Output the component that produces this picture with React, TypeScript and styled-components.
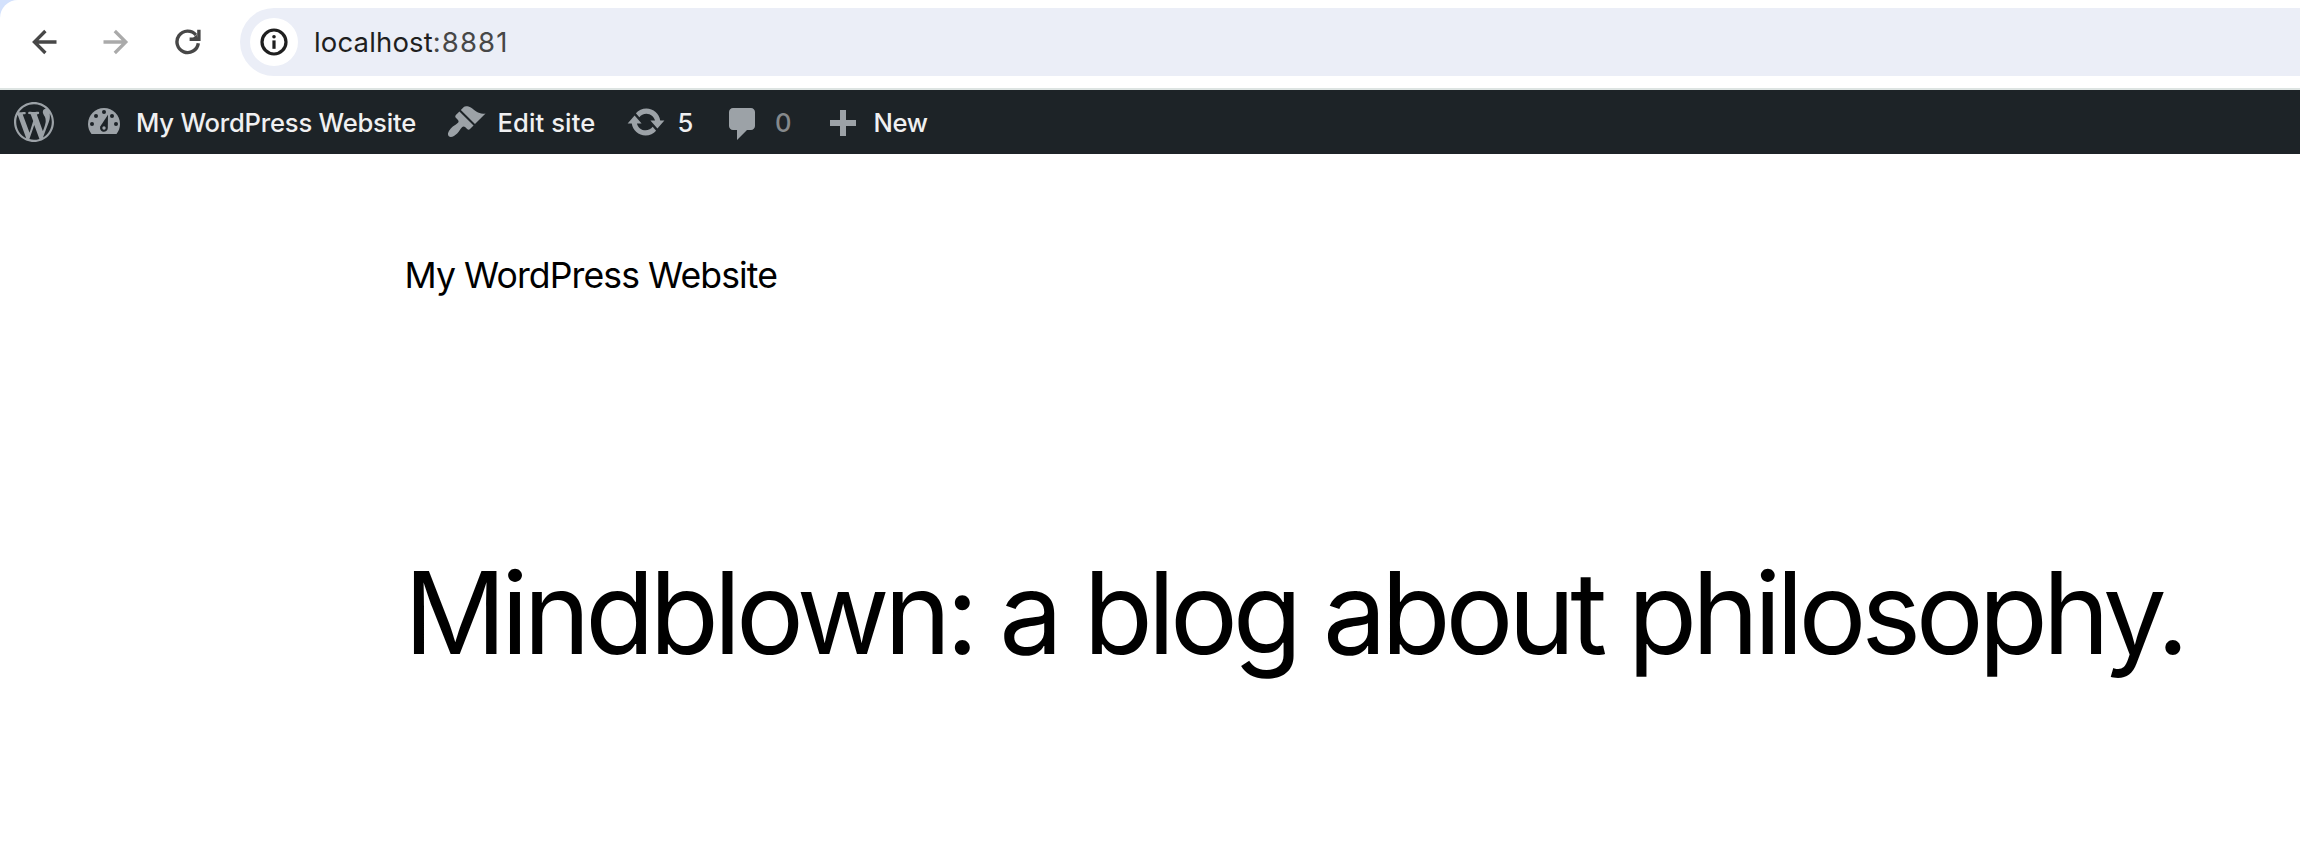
import React from "react";
import styled, { createGlobalStyle } from "styled-components";

const GlobalStyle = createGlobalStyle`
  * { box-sizing: border-box; }
  body { margin: 0; background: #fff; font-family: Inter, "Liberation Sans", sans-serif; }
`;

const Page = styled.div`
  width: 100%;
  height: 868px;
  overflow: hidden;
  background: #fff;
`;

const TabStrip = styled.div`
  background: #d3e1fc;
`;

const BrowserBar = styled.header`
  display: flex;
  align-items: flex-start;
  height: 88px;
  padding: 8px 0 0 20px;
  background: #fff;
  border-top-left-radius: 18px;
`;

const NavButton = styled.span<{ $muted?: boolean; $gap: number }>`
  display: flex;
  width: 48px;
  height: 68px;
  align-items: center;
  justify-content: center;
  margin-right: ${(p) => p.$gap}px;
  color: ${(p) => (p.$muted ? "#aaaaaa" : "#474747")};
`;

const AddressField = styled.div`
  display: flex;
  flex: 1;
  align-items: center;
  height: 68px;
  padding-left: 10px;
  border-radius: 34px 0 0 34px;
  background: #ebeef7;
`;

const InfoButton = styled.span`
  display: flex;
  width: 48px;
  height: 48px;
  align-items: center;
  justify-content: center;
  border-radius: 50%;
  background: #fff;
  color: #1f1f1f;
`;

const Address = styled.span`
  margin-left: 16px;
  font-size: 27.5px;
  line-height: 34px;
  letter-spacing: 0.15px;
  color: #1f1f1f;
  white-space: pre;
`;

const Port = styled.span`
  letter-spacing: 1.1px;
  color: #474747;
`;

const AdminBar = styled.nav`
  display: flex;
  height: 66px;
  padding-left: 14px;
  border-top: 2px solid #dde4e2;
  background: #1d2327;
`;

const AdminItem = styled.span<{ $gap: number }>`
  display: flex;
  height: 64px;
  margin-right: ${(p) => p.$gap}px;
`;

const Glyph = styled.svg<{ $top: number }>`
  width: 40px;
  height: 40px;
  flex: none;
  margin-top: ${(p) => p.$top}px;
  fill: #9ca2a7;
`;

const AdminLabel = styled.span<{ $width: number; $left: number; $spacing?: number; $muted?: boolean }>`
  width: ${(p) => p.$width}px;
  margin-left: ${(p) => p.$left}px;
  font-size: 25.6px;
  font-weight: 450;
  line-height: 66px;
  letter-spacing: ${(p) => p.$spacing ?? 0}px;
  white-space: nowrap;
  color: ${(p) => (p.$muted ? "#85898c" : "#f0f0f1")};
`;

const Content = styled.main`
  display: flex;
  flex-direction: column;
  align-items: flex-start;
  padding: 98px 0 0 404px;
  color: #000;
`;

const SiteTitle = styled.p`
  margin: 0 0 0 0.5px;
  font-size: 35.6px;
  font-weight: 430;
  line-height: 48px;
  letter-spacing: -0.9px;
  white-space: nowrap;
`;

const Headline = styled.h1`
  margin: 247px 0 0;
  font-size: 113.4px;
  font-weight: 440;
  line-height: 132px;
  letter-spacing: -5.21px;
  word-spacing: -0.9px;
  white-space: nowrap;
`;

const paths = {
  wordpress:
    "M20 10c0-5.51-4.49-10-10-10C4.48 0 0 4.49 0 10c0 5.52 4.48 10 10 10 5.51 0 10-4.48 10-10zM7.78 15.37L4.37 6.22c.55-.02 1.17-.08 1.17-.08.5-.06.44-1.13-.06-1.11 0 0-1.45.11-2.37.11-.18 0-.37 0-.58-.01C4.12 2.69 6.87 1.11 10 1.11c2.33 0 4.45.87 6.05 2.34-.68-.11-1.65.39-1.65 1.58 0 .74.45 1.36.9 2.1.35.61.55 1.36.55 2.46 0 1.49-1.4 5-1.4 5l-3.03-8.37c.54-.02.82-.17.82-.17.5-.05.44-1.25-.06-1.22 0 0-1.44.12-2.38.12-.87 0-2.33-.12-2.33-.12-.5-.03-.56 1.2-.06 1.22l.92.08 1.26 3.41zM17.41 10c.24-.64.74-1.87.43-4.25.7 1.29 1.05 2.71 1.05 4.25 0 3.29-1.73 6.24-4.4 7.78.97-2.59 1.94-5.2 2.92-7.78zM6.1 18.09C3.12 16.65 1.11 13.53 1.11 10c0-1.3.23-2.48.72-3.59C3.25 10.3 4.67 14.2 6.1 18.09zm4.03-6.63l2.58 6.98c-.86.29-1.76.45-2.71.45-.79 0-1.57-.11-2.29-.33.81-2.38 1.62-4.74 2.42-7.1z",
  brush:
    "M14.48 11.06L7.41 3.99l1.5-1.5c.5-.56 2.3-.47 3.51.32 1.21.8 1.43 1.28 2.91 2.1 1.18.64 2.45 1.26 4.45.85zm-.71.71L6.7 4.7 4.93 6.47c-.39.39-.39 1.02 0 1.41l1.06 1.06c.39.39.39 1.03 0 1.42-.6.6-1.43 1.11-2.21 1.69-.35.26-.7.53-1.01.84C1.43 14.23.4 16.08 1.4 17.07c.99 1 2.84-.03 4.18-1.36.31-.31.58-.66.85-1.02.57-.78 1.08-1.61 1.69-2.21.39-.39 1.02-.39 1.41 0l1.06 1.06c.39.39 1.02.39 1.41 0z",
  update:
    "M10.2 3.28c3.53 0 6.43 2.61 6.92 6h2.08l-3.5 4-3.5-4h2.32c-.45-1.97-2.21-3.45-4.32-3.45-1.45 0-2.73.71-3.54 1.78L4.95 5.66C6.23 4.2 8.11 3.28 10.2 3.28zm-.4 13.44c-3.52 0-6.43-2.61-6.92-6H.8l3.5-4c1.17 1.33 2.33 2.67 3.5 4H5.48c.45 1.97 2.21 3.45 4.32 3.45 1.45 0 2.73-.71 3.54-1.78l1.71 1.95c-1.28 1.46-3.15 2.38-5.25 2.38z",
  comment: "M5 2h9c1.1 0 2 .9 2 2v7c0 1.1-.9 2-2 2h-2l-5 5v-5H5c-1.1 0-2-.9-2-2V4c0-1.1.9-2 2-2z",
  plus: "M17 7v3h-5v5H9v-5H4V7h5V2h3v5h5z",
};

const PathIcon = ({ d, top }: { d: string; top: number }) => (
  <Glyph viewBox="0 0 20 20" $top={top}>
    <path d={d} />
  </Glyph>
);

const GaugeIcon = () => (
  <Glyph viewBox="0 0 20 20" $top={10}>
    <path d="M3.76 17h12.48c1.1-1.37 1.76-3.11 1.76-5 0-4.42-3.58-8-8-8s-8 3.58-8 8c0 1.89.66 3.63 1.76 5z" />
    <g fill="#1d2327">
      <circle cx="10" cy="6" r="1" />
      <circle cx="6" cy="8" r="1" />
      <circle cx="14" cy="8" r="1" />
      <circle cx="4" cy="12" r="1" />
      <circle cx="16" cy="12" r="1" />
      <path d="M12 7.4l-.1 6.6a1.95 1.95 0 1 1-3.7-.9z" />
    </g>
    <circle cx="10" cy="14" r=".85" />
  </Glyph>
);

export default function App() {
  return (
    <Page>
      <GlobalStyle />
      <TabStrip>
        <BrowserBar>
          <NavButton $gap={24}>
            <svg width="26" height="26" viewBox="0 0 26 26" fill="none" stroke="currentColor" strokeWidth="3.3">
              <path d="M25.5 13H4M14.4 2L3.4 13l11 11" />
            </svg>
          </NavButton>
          <NavButton $gap={24} $muted>
            <svg width="26" height="26" viewBox="0 0 26 26" fill="none" stroke="currentColor" strokeWidth="3.3">
              <path d="M.5 13h22M11.8 2l11 11-11 11" />
            </svg>
          </NavButton>
          <NavButton $gap={28}>
            <svg width="26" height="26" viewBox="0 0 26 26" fill="none" stroke="currentColor" strokeWidth="3.4">
              <path d="M23.3 14.2A10.7 10.7 0 1 1 20.9 6M23.9 .8v9.5H14.6" />
              <path d="M17.5 9.5L21.5 5.5L23 9.5z" fill="currentColor" stroke="none" />
            </svg>
          </NavButton>
          <AddressField>
            <InfoButton>
              <svg width="28" height="28" viewBox="0 0 28 28" fill="currentColor">
                <circle cx="14" cy="14" r="12" fill="none" stroke="currentColor" strokeWidth="3.2" />
                <rect x="12.4" y="12.4" width="3.2" height="8.4" />
                <circle cx="14" cy="8.8" r="1.8" />
              </svg>
            </InfoButton>
            <Address>
              localhost<Port>:8881</Port>
            </Address>
          </AddressField>
        </BrowserBar>
      </TabStrip>
      <AdminBar>
        <AdminItem $gap={30}>
          <PathIcon d={paths.wordpress} top={12} />
        </AdminItem>
        <AdminItem $gap={30}>
          <GaugeIcon />
          <AdminLabel $left={12} $width={280} $spacing={-0.22}>My WordPress Website</AdminLabel>
        </AdminItem>
        <AdminItem $gap={30}>
          <PathIcon d={paths.brush} top={12} />
          <AdminLabel $left={11.5} $width={98.5} $spacing={0.1}>Edit site</AdminLabel>
        </AdminItem>
        <AdminItem $gap={29}>
          <PathIcon d={paths.update} top={12} />
          <AdminLabel $left={11.5} $width={16.5}>5</AdminLabel>
        </AdminItem>
        <AdminItem $gap={30}>
          <PathIcon d={paths.comment} top={14} />
          <AdminLabel $left={12} $width={17} $muted>0</AdminLabel>
        </AdminItem>
        <AdminItem $gap={0}>
          <PathIcon d={paths.plus} top={16} />
          <AdminLabel $left={11.5} $width={56} $spacing={-0.3}>New</AdminLabel>
        </AdminItem>
      </AdminBar>
      <Content>
        <SiteTitle>My WordPress Website</SiteTitle>
        <Headline>Mindblown: a blog about philosophy.</Headline>
      </Content>
    </Page>
  );
}
